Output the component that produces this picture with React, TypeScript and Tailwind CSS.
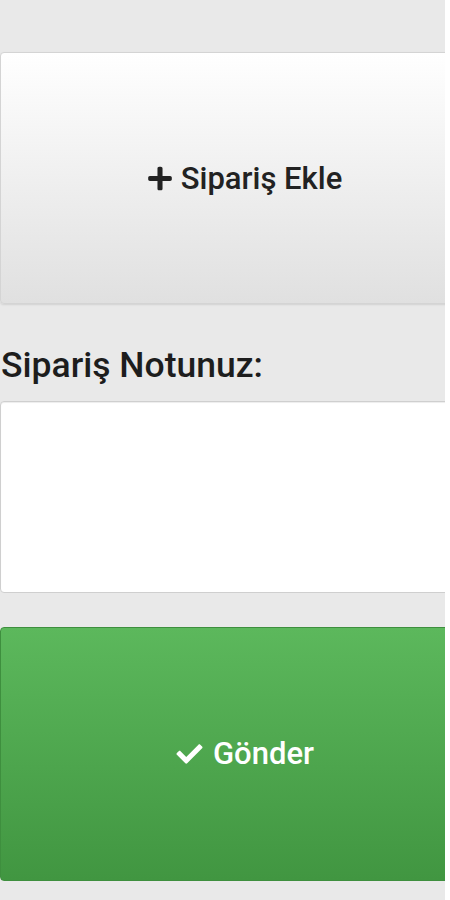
export default function App() {
  return (
    <div className="flex min-h-[900px] w-full bg-white font-['Roboto',sans-serif]">
      <div className="flex w-[445px] flex-col overflow-hidden bg-[#e9e9e9] pt-[52px]">
        <button className="flex h-[252px] w-[490px] shrink-0 items-center justify-center gap-[9px] rounded-[4px] border border-[#d4d4d4] bg-gradient-to-b from-white to-[#e0e0e0] text-[#222] shadow-[0_1px_2px_rgba(0,0,0,0.1)]">
          <svg viewBox="0 0 448 512" className="h-[27px] w-[24px] fill-[#222]">
            <path d="M416 208H272V64c0-17.67-14.33-32-32-32h-32c-17.67 0-32 14.33-32 32v144H32c-17.67 0-32 14.33-32 32v32c0 17.67 14.33 32 32 32h144v144c0 17.67 14.33 32 32 32h32c17.67 0 32-14.33 32-32V304h144c17.67 0 32-14.33 32-32v-32c0-17.67-14.33-32-32-32z" />
          </svg>
          <span className="text-[31px] font-medium leading-none">Sipariş Ekle</span>
        </button>

        <label className="mt-[44px] pl-[1px] text-[35.5px] font-medium leading-none text-[#1d1d1d]">
          Sipariş Notunuz:
        </label>

        <textarea className="mt-[17px] h-[192px] w-[490px] shrink-0 resize-none rounded-[4px] border border-[#cfcfcf] bg-white shadow-[inset_0_1px_1px_rgba(0,0,0,0.075)] outline-none" />

        <button className="mt-[34px] flex h-[254px] w-[490px] shrink-0 items-center justify-center gap-[10px] rounded-[4px] border border-[#3e8f3e] bg-gradient-to-b from-[#5cb85c] to-[#419641] text-white">
          <svg viewBox="0 0 512 512" className="h-[26px] w-[27px] fill-white">
            <path d="M173.898 439.404l-166.4-166.4c-9.997-9.997-9.997-26.206 0-36.204l36.203-36.204c9.997-9.998 26.207-9.998 36.204 0L192 312.69 432.095 72.596c9.997-9.997 26.207-9.997 36.204 0l36.203 36.204c9.997 9.997 9.997 26.206 0 36.204l-294.4 294.401c-9.998 9.997-26.207 9.997-36.204-.001z" />
          </svg>
          <span className="text-[31px] font-medium leading-none">Gönder</span>
        </button>
      </div>
    </div>
  );
}
